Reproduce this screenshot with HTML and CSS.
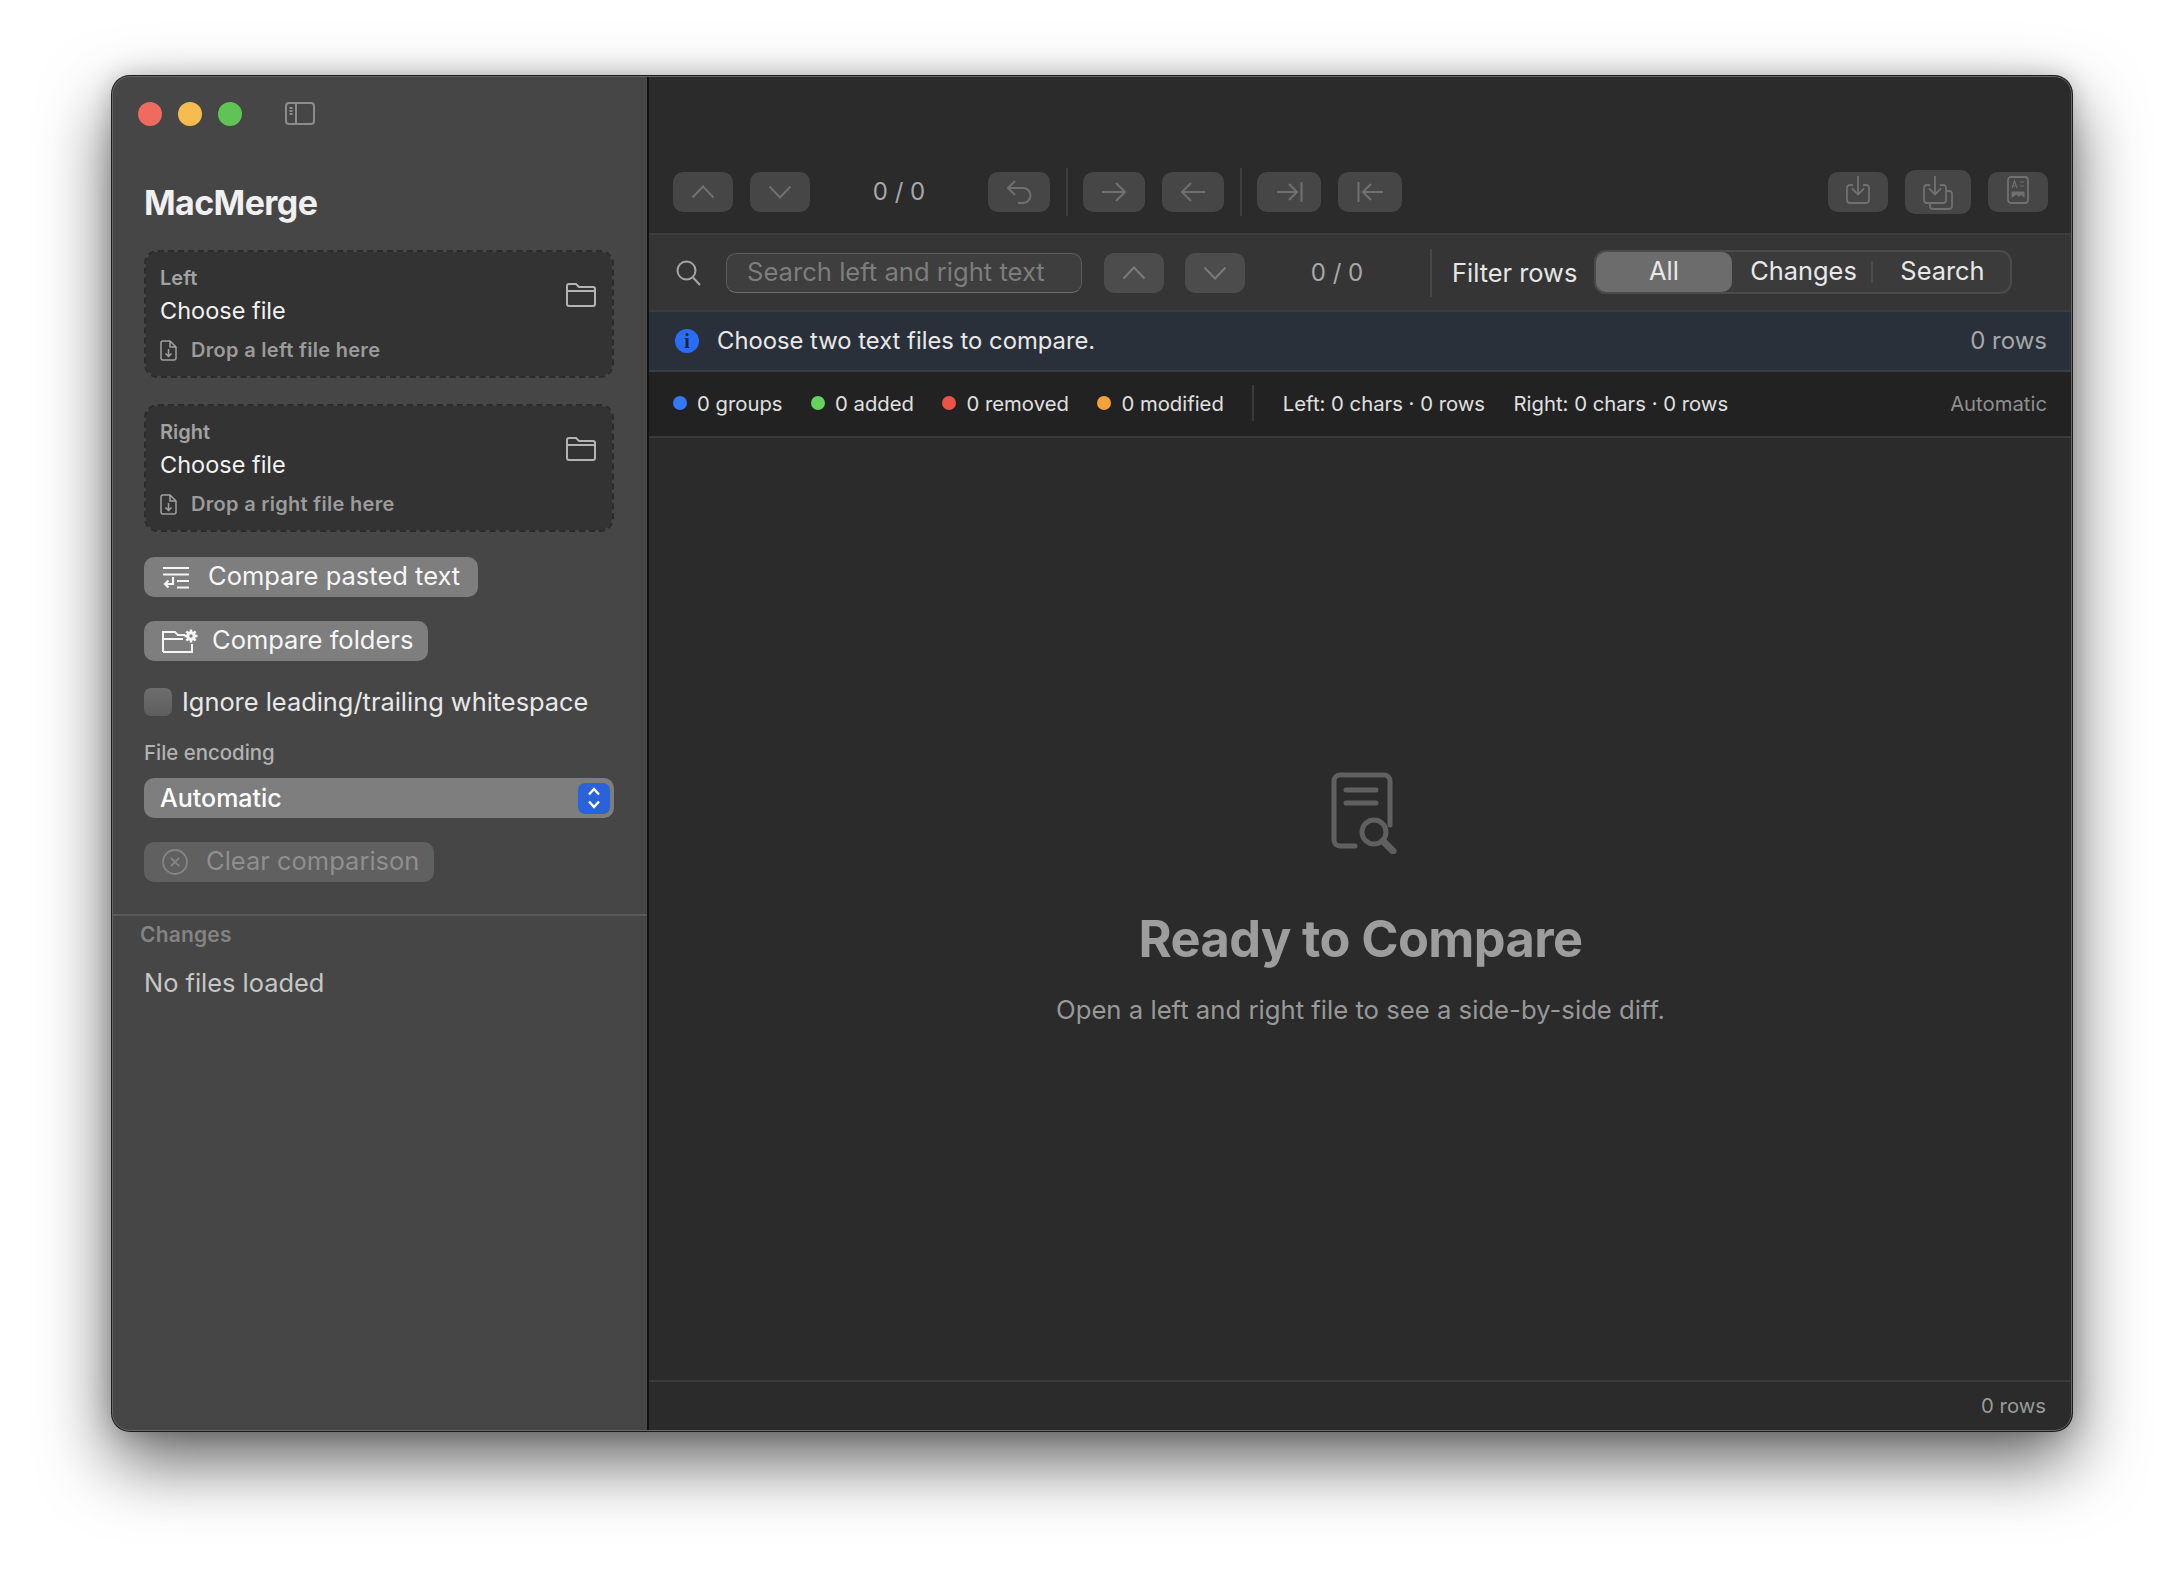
FILE: index.html
```html
<!DOCTYPE html>
<html lang="en">
<head>
    <meta charset="UTF-8">
    <title>MacMerge</title>
    <link rel="stylesheet" href="styles.css">
</head>
<body>
    <div class="window">
        <aside class="sidebar">
            <div class="titlebar">
                <span class="light red"></span>
                <span class="light yellow"></span>
                <span class="light green"></span>
                <svg class="sidebar-toggle" width="30" height="23" viewBox="0 0 30 23"><rect x="1" y="1" width="28" height="21" rx="3"/><path d="M11 1v21M4.500 6h3M4.500 9h3M4.500 12h3"/></svg>
            </div>
            <h1 class="app-title">MacMerge</h1>

            <div class="drop-card">
                <div class="drop-text">
                    <div class="drop-label">Left</div>
                    <div class="drop-file">Choose file</div>
                    <div class="drop-hint">
                        <svg width="17" height="21" viewBox="0 0 17 21"><path d="M3 1h7l6 6v11a2 2 0 0 1-2 2H3a2 2 0 0 1-2-2V3a2 2 0 0 1 2-2zM10 1v6h6M8.500 9v7.500M5.500 13.500l3 3 3-3"/></svg>
                        Drop a left file here
                    </div>
                </div>
                <svg class="folder-icon" width="30" height="24" viewBox="0 0 30 24"><path d="M1 5V3a2 2 0 0 1 2-2h7l3 3h14a2 2 0 0 1 2 2v15a2 2 0 0 1-2 2H3a2 2 0 0 1-2-2V5zM1 8h28"/></svg>
            </div>

            <div class="drop-card">
                <div class="drop-text">
                    <div class="drop-label">Right</div>
                    <div class="drop-file">Choose file</div>
                    <div class="drop-hint">
                        <svg width="17" height="21" viewBox="0 0 17 21"><path d="M3 1h7l6 6v11a2 2 0 0 1-2 2H3a2 2 0 0 1-2-2V3a2 2 0 0 1 2-2zM10 1v6h6M8.500 9v7.500M5.500 13.500l3 3 3-3"/></svg>
                        Drop a right file here
                    </div>
                </div>
                <svg class="folder-icon" width="30" height="24" viewBox="0 0 30 24"><path d="M1 5V3a2 2 0 0 1 2-2h7l3 3h14a2 2 0 0 1 2 2v15a2 2 0 0 1-2 2H3a2 2 0 0 1-2-2V5zM1 8h28"/></svg>
            </div>

            <button class="side-btn paste-btn">
                <svg width="28" height="23" viewBox="0 0 28 23"><path d="M1 2h26M1 8.500h26M15 15h12M15 21.500h12M11 11v7H3M6.500 14.500L3 18l3.500 3.500"/></svg>
                Compare pasted text
            </button>
            <button class="side-btn folders-btn">
                <svg width="36" height="24" viewBox="0 0 36 24"><path d="M1 23V3h12l3 3h7M1 10h20M30 15v8H1"/><path d="M29 0.500v13M22.500 7h13M24.400 2.400l9.200 9.200M33.600 2.400l-9.200 9.200" class="gear-teeth"/><circle cx="29" cy="7" r="4.800" class="gear"/><circle cx="29" cy="7" r="1.700" class="gear-hole"/></svg>
                Compare folders
            </button>

            <label class="check-row">
                <span class="checkbox"></span>
                Ignore leading/trailing whitespace
            </label>

            <div class="field-label">File encoding</div>
            <div class="select">
                Automatic
                <span class="stepper">
                    <svg width="14" height="24" viewBox="0 0 14 24"><path d="M2 8.500L7 3l5 5.500M2 15.500L7 21l5-5.500"/></svg>
                </span>
            </div>

            <button class="side-btn clear-btn">
                <svg width="26" height="26" viewBox="0 0 26 26"><circle cx="13" cy="13" r="12"/><path d="M8.800 8.800l8.400 8.400M17.200 8.800l-8.400 8.400"/></svg>
                Clear comparison
            </button>

            <div class="changes">
                <div class="changes-title">Changes</div>
                <div class="changes-empty">No files loaded</div>
            </div>
        </aside>

        <main class="main">
            <div class="toolbar">
                <button class="tool-btn"><svg width="24" height="14" viewBox="0 0 24 14"><path d="M1.500 12.500L12 1.500l10.500 11"/></svg></button>
                <button class="tool-btn"><svg width="24" height="14" viewBox="0 0 24 14"><path d="M1.500 1.500L12 12.500l10.500-11"/></svg></button>
                <div class="counter">0 / 0</div>
                <button class="tool-btn wide"><svg width="26" height="24" viewBox="0 0 26 24"><path d="M9 1L2 8l7 7M2 8h15a7 7 0 0 1 0 15h-5"/></svg></button>
                <span class="tool-sep"></span>
                <button class="tool-btn wide"><svg width="26" height="20" viewBox="0 0 26 20"><path d="M1 10h23M15 1l9 9-9 9"/></svg></button>
                <button class="tool-btn wide"><svg width="26" height="20" viewBox="0 0 26 20"><path d="M25 10H2M11 1l-9 9 9 9"/></svg></button>
                <span class="tool-sep late"></span>
                <button class="tool-btn wider"><svg width="27" height="20" viewBox="0 0 27 20"><path d="M1 10h20M13 2l8 8-8 8M25.500 0v20"/></svg></button>
                <button class="tool-btn wider"><svg width="27" height="20" viewBox="0 0 27 20"><path d="M26 10H6M14 2l-8 8 8 8M1.500 0v20"/></svg></button>
                <div class="tool-right">
                    <button class="tool-btn save"><svg width="24" height="28" viewBox="0 0 24 28"><path d="M7 9H4a3 3 0 0 0-3 3v12a3 3 0 0 0 3 3h16a3 3 0 0 0 3-3V12a3 3 0 0 0-3-3h-3M12 0v18M6 12.500l6 6 6-6"/></svg></button>
                    <button class="tool-btn save-all"><svg width="30" height="34" viewBox="0 0 30 34"><path d="M7 9H4a3 3 0 0 0-3 3v12a3 3 0 0 0 3 3h16a3 3 0 0 0 3-3V12a3 3 0 0 0-3-3h-3M12 0v18M6 12.500l6 6 6-6M7 27v3a3 3 0 0 0 3 3h16a3 3 0 0 0 3-3V18a3 3 0 0 0-3-3h-3"/></svg></button>
                    <button class="tool-btn save"><svg width="22" height="28" viewBox="0 0 22 28"><rect x="1" y="1" width="20" height="26" rx="3"/><path d="M5 12l2.500-7 2.500 7M5.800 10h3.400M13 6h4M13 10h4" class="thin"/><path d="M4.500 22v-6.500h13V22l-3.500-3-2.500 2-2-2.500z" class="solid"/></svg></button>
                </div>
            </div>

            <div class="search-row">
                <svg class="search-icon" width="25" height="26" viewBox="0 0 25 26"><circle cx="10.500" cy="10.500" r="9"/><path d="M17 17.500l7 7.500"/></svg>
                <div class="search-input">Search left and right text</div>
                <button class="tool-btn"><svg width="24" height="14" viewBox="0 0 24 14"><path d="M1.500 12.500L12 1.500l10.500 11"/></svg></button>
                <button class="tool-btn"><svg width="24" height="14" viewBox="0 0 24 14"><path d="M1.500 1.500L12 12.500l10.500-11"/></svg></button>
                <div class="counter search-counter">0 / 0</div>
                <span class="filter-sep"></span>
                <span class="filter-label">Filter rows</span>
                <div class="segments">
                    <span class="segment active">All</span>
                    <span class="segment">Changes</span>
                    <span class="segment divided">Search</span>
                </div>
            </div>

            <div class="info-row">
                <span class="info-icon">i</span>
                <span class="info-text">Choose two text files to compare.</span>
                <span class="row-count">0 rows</span>
            </div>

            <div class="stats-row">
                <span class="stat"><i class="dot blue"></i>0 groups</span>
                <span class="stat"><i class="dot lime"></i>0 added</span>
                <span class="stat"><i class="dot coral"></i>0 removed</span>
                <span class="stat"><i class="dot orange"></i>0 modified</span>
                <span class="stat-sep"></span>
                <span class="stat">Left: 0 chars · 0 rows</span>
                <span class="stat">Right: 0 chars · 0 rows</span>
                <span class="stat-encoding">Automatic</span>
            </div>

            <div class="empty">
                <svg class="empty-icon" width="66" height="82" viewBox="0 0 66 82"><path d="M24 74H9a6 6 0 0 1-6-6V9a6 6 0 0 1 6-6h44a6 6 0 0 1 6 6v44" class="doc"/><path d="M15 18h30M15 31h30" class="doc"/><circle cx="43" cy="60" r="12" class="doc"/><path d="M52 69l10 10" class="handle"/></svg>
                <h2 class="empty-title">Ready to Compare</h2>
                <p class="empty-sub">Open a left and right file to see a side-by-side diff.</p>
            </div>

            <div class="status">0 rows</div>
        </main>
    </div>
</body>
</html>
```

FILE: styles.css
```css
body {
    margin: 0;
    padding: 76px 112px 0;
    background-color: #fff;
    font-family: Inter, "Noto Sans", sans-serif;
    color: #fff;
    height: 1580px;
    box-sizing: border-box;
    overflow: hidden;
}

svg {
    fill: none;
    stroke: currentColor;
    flex: none;
}

button {
    font-family: inherit;
    border: none;
    padding: 0;
}

.window {
    width: 1960px;
    height: 1355px;
    display: flex;
    position: relative;
    border-radius: 18px;
    overflow: hidden;
    background-color: #2a2b2a;
    box-shadow: 0 0 0 1px #1c1c1c, 0 30px 70px rgba(0, 0, 0, 0.62), 0 0 24px rgba(0, 0, 0, 0.2);
}

.window::after {
    content: "";
    position: absolute;
    inset: 0;
    border: 1px solid #676767;
    border-radius: 18px;
    pointer-events: none;
}

/* sidebar */
.sidebar {
    width: 537px;
    flex: none;
    box-sizing: border-box;
    padding: 0 33px 0 32px;
    background-color: #464646;
    border-right: 2px solid #111;
    display: flex;
    flex-direction: column;
    align-items: flex-start;
}

.titlebar {
    height: 75px;
    display: flex;
    align-items: center;
    gap: 16px;
    margin-left: -6px;
}

.light {
    width: 24px;
    height: 24px;
    border-radius: 50%;
}

.red { background-color: #ef6a5f; }
.yellow { background-color: #f5bd4f; }
.green { background-color: #5fc454; }

.sidebar-toggle {
    color: #8c8c8c;
    stroke-width: 2;
    margin-left: 27px;
}

.app-title {
    margin: 32px 0 27px;
    font-size: 34px;
    line-height: 40px;
    font-weight: 700;
    letter-spacing: -0.6px;
    color: #f0f0f0;
}

.drop-card {
    width: 470px;
    height: 128px;
    box-sizing: border-box;
    margin-bottom: 26px;
    padding: 0 16px 0 14px;
    display: flex;
    align-items: flex-start;
    justify-content: space-between;
    background-color: #333;
    background-clip: padding-box;
    border: 2px dashed #2b2b2b;
    border-radius: 14px;
}

.drop-label {
    margin-top: 14px;
    font-size: 20px;
    line-height: 24px;
    font-weight: 600;
    color: #a2a2a2;
}

.drop-file {
    margin-top: 6px;
    font-size: 23.500px;
    line-height: 30px;
    color: #f2f2f2;
}

.drop-hint {
    margin-top: 10px;
    display: flex;
    align-items: center;
    gap: 14px;
    font-size: 20px;
    line-height: 28px;
    font-weight: 600;
    letter-spacing: 0.3px;
    color: #9b9b9b;
}

.drop-hint svg {
    color: #a0a0a0;
    stroke-width: 1.500;
}

.folder-icon {
    margin-top: 31px;
    color: #b4b4b4;
    stroke-width: 2;
}

.side-btn {
    height: 40px;
    box-sizing: border-box;
    padding-bottom: 3px;
    display: flex;
    align-items: center;
    border-radius: 10px;
    background-color: #7e7e7e;
    color: #f6f6f6;
    font-size: 25.500px;
}

.side-btn svg { margin-top: 3px; }

.paste-btn {
    width: 334px;
    margin-top: -1px;
    padding-left: 18px;
    gap: 18px;
}

.paste-btn svg { stroke-width: 2.200; }

.folders-btn {
    width: 284px;
    margin-top: 24px;
    padding-left: 18px;
    gap: 14px;
}

.folders-btn svg { stroke-width: 2; }
.folders-btn .gear { fill: #f6f6f6; stroke: none; }
.folders-btn .gear-hole { fill: #7e7e7e; stroke: none; }
.folders-btn .gear-teeth { stroke-width: 2.400; }

.check-row {
    margin-top: 27px;
    height: 28px;
    display: flex;
    align-items: center;
    gap: 10px;
    font-size: 25.400px;
    line-height: 26px;
    color: #e8e8e8;
}

.checkbox {
    width: 28px;
    height: 28px;
    border-radius: 7px;
    background: linear-gradient(#6d6d6d, #5e5e5e);
}

.field-label {
    margin-top: 25px;
    font-size: 20.400px;
    line-height: 24px;
    font-weight: 500;
    color: #b2b2b2;
}

.select {
    width: 470px;
    height: 40px;
    margin-top: 13px;
    box-sizing: border-box;
    padding: 0 4px 0 16px;
    display: flex;
    align-items: center;
    justify-content: space-between;
    border-radius: 10px;
    background-color: #7e7e7e;
    font-size: 25px;
    font-weight: 500;
    line-height: 34px;
    color: #fff;
}

.stepper {
    width: 32px;
    height: 31px;
    display: flex;
    align-items: center;
    justify-content: center;
    border-radius: 7px;
    background-color: #2a62d9;
    color: #fff;
}

.stepper svg { stroke-width: 2.400; }

.clear-btn {
    width: 290px;
    margin-top: 24px;
    padding-left: 18px;
    gap: 18px;
    background-color: #606060;
    color: #8f8f8f;
}

.clear-btn svg {
    color: #858585;
    stroke-width: 1.800;
}

.changes {
    align-self: stretch;
    margin: 32px -33px 0 -32px;
    padding: 8px 33px 0 32px;
    border-top: 2px solid #5a5a5a;
}

.changes-title {
    margin-left: -4px;
    font-size: 21px;
    line-height: 22px;
    font-weight: 600;
    letter-spacing: 0.2px;
    color: #838383;
}

.changes-empty {
    margin-top: 22px;
    font-size: 25.400px;
    line-height: 30px;
    color: #c6c6c6;
}

/* main area */
.main {
    flex: 1;
    min-width: 0;
    display: flex;
    flex-direction: column;
}

.toolbar {
    height: 157px;
    box-sizing: border-box;
    padding: 96px 24px 0;
    display: flex;
    align-items: flex-start;
}

.tool-btn {
    width: 60px;
    height: 40px;
    flex: none;
    display: flex;
    align-items: center;
    justify-content: center;
    border-radius: 10px;
    background-color: #454645;
    color: #6f706f;
    margin-right: 17px;
}

.tool-btn svg { stroke-width: 2; }

.tool-btn.wide {
    width: 62px;
    margin-right: 17px;
}

.tool-btn.wider {
    width: 64px;
    margin-right: 17px;
}

.counter {
    width: 178px;
    margin-left: -17px;
    text-align: center;
    font-size: 24px;
    line-height: 40px;
    color: #a8a8a8;
}

.tool-sep {
    width: 2px;
    height: 48px;
    margin: -4px 15px 0 -1px;
    background-color: #3e3f3e;
}

.tool-sep.late { margin-left: -1px; }

.tool-right {
    margin-left: auto;
    display: flex;
    align-items: center;
    gap: 17px;
    height: 40px;
}

.tool-right .tool-btn { margin-right: 0; }

.save svg,
.save-all svg {
    stroke-width: 1.800;
    margin-top: -4px;
}

.save-all {
    width: 66px;
    height: 44px;
}

.save-all svg { margin-top: 2px; }

.save .thin { stroke-width: 1.200; }
.save .solid { fill: currentColor; stroke: none; }

.search-row {
    height: 79px;
    box-sizing: border-box;
    padding: 0 0 0 27px;
    display: flex;
    align-items: center;
    background-color: #343534;
    border-top: 2px solid #3c3d3c;
    border-bottom: 2px solid #3c3d3c;
}

.search-icon {
    color: #a6a6a6;
    stroke-width: 2;
    margin-right: 25px;
}

.search-input {
    width: 356px;
    height: 40px;
    box-sizing: border-box;
    padding-left: 20px;
    margin-right: 22px;
    border: 1px solid #5c5c5c;
    border-bottom-color: #707070;
    border-radius: 10px;
    background-color: #3e3e3e;
    font-size: 25.600px;
    line-height: 36px;
    color: #7d7d7d;
}

.search-row .tool-btn {
    background-color: #4c4c4c;
    color: #7a7a7a;
    margin-right: 21px;
}

.search-counter {
    width: 184px;
    margin-left: -21px;
}

.filter-sep {
    width: 2px;
    height: 48px;
    background-color: #474747;
    margin-left: 1px;
}

.filter-label {
    margin-left: 20px;
    width: 142px;
    font-size: 25.400px;
    color: #e6e6e6;
}

.segments {
    width: 418px;
    height: 44px;
    box-sizing: border-box;
    margin-top: -1px;
    display: flex;
    border: 2px solid #4b4b4b;
    border-radius: 12px;
    background-color: #3b3b3b;
}

.segment {
    flex: 1;
    display: flex;
    align-items: center;
    justify-content: center;
    position: relative;
    padding: 0 0 2px 4px;
    font-size: 25.400px;
    line-height: 36px;
    color: #e8e8e8;
}

.segment.active {
    flex: none;
    width: 136px;
    box-sizing: border-box;
    padding: 0 0 2px;
    border-radius: 10px;
    background-color: #6c6c6c;
}

.segment.divided::before {
    content: "";
    position: absolute;
    left: 0;
    top: 9px;
    height: 22px;
    width: 2px;
    background-color: #4a4a4a;
}

.info-row {
    height: 60px;
    box-sizing: border-box;
    flex: none;
    padding: 0 25px 0 26px;
    display: flex;
    align-items: center;
    background-color: #2a303a;
    border-bottom: 2px solid #3b3d40;
}

.info-icon {
    width: 24px;
    height: 24px;
    border-radius: 50%;
    background-color: #2a6df4;
    color: #1d2430;
    font-family: "Liberation Serif", serif;
    font-weight: 700;
    font-size: 20px;
    line-height: 24px;
    text-align: center;
    margin-right: 18px;
}

.info-text {
    font-size: 23.800px;
    line-height: 28px;
    padding-bottom: 1px;
    color: #e8e8e8;
}

.row-count {
    margin-left: auto;
    font-size: 24px;
    line-height: 28px;
    padding-bottom: 1px;
    color: #a5a7a9;
}

.stats-row {
    height: 66px;
    box-sizing: border-box;
    flex: none;
    padding: 0 25px 2px 24px;
    display: flex;
    align-items: center;
    gap: 28.500px;
    background-color: #222;
    border-bottom: 2px solid #3a3a3a;
    font-size: 20.300px;
    color: #e0e0e0;
}

.stat {
    display: flex;
    align-items: center;
}

.dot {
    width: 14px;
    height: 14px;
    border-radius: 50%;
    margin-right: 10px;
}

.dot.blue { background-color: #3478f6; }
.dot.lime { background-color: #65d45e; }
.dot.coral { background-color: #ea5345; }
.dot.orange { background-color: #f3a33a; }

.stat-sep {
    width: 2px;
    height: 36px;
    background-color: #3a3a3a;
}

.stat-encoding {
    margin-left: auto;
    color: #8f8f8f;
}

.empty {
    flex: 1;
    padding-top: 334px;
    box-sizing: border-box;
    display: flex;
    flex-direction: column;
    align-items: center;
}

.empty-icon {
    color: #5f605f;
    margin-left: 6px;
}

.empty-icon .doc { stroke-width: 5; stroke-linecap: round; }
.empty-icon .handle { stroke-width: 7; stroke-linecap: round; }

.empty-title {
    margin: 56px 0 0;
    font-size: 50.500px;
    line-height: 58px;
    font-weight: 700;
    letter-spacing: -0.6px;
    color: #9c9d9c;
}

.empty-sub {
    margin: 26px 0 0;
    font-size: 25.700px;
    line-height: 32px;
    color: #989998;
}

.status {
    height: 51px;
    flex: none;
    box-sizing: border-box;
    padding: 0 26px 2px;
    display: flex;
    align-items: center;
    justify-content: flex-end;
    border-top: 2px solid #3a3b3a;
    font-size: 20.300px;
    color: #9a9b9a;
}
```
